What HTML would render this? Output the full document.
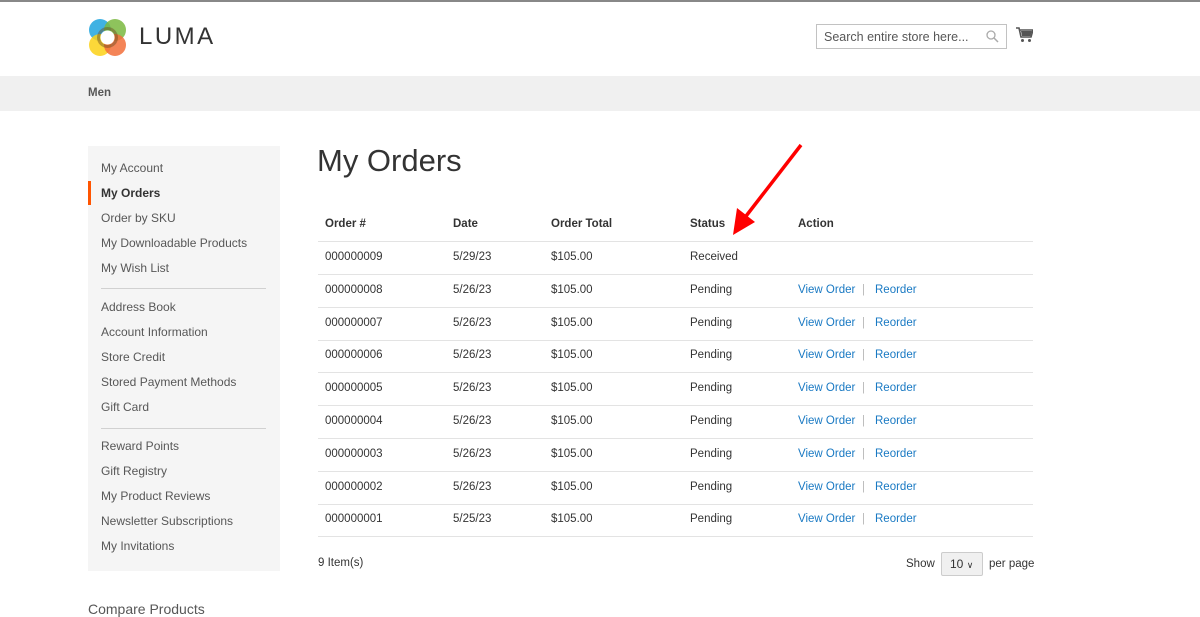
<!DOCTYPE html>
<html><head><meta charset="utf-8"><style>
*{margin:0;padding:0;box-sizing:border-box}
body{width:1200px;height:611px;overflow:hidden;background:#fff;font-family:"Liberation Sans",sans-serif;color:#333;font-size:12px;position:relative}
.a{position:absolute}
.nav{left:0;top:76px;width:1200px;height:35px;background:#f0f0f0}
.side{left:88px;top:146px;width:192px;height:425px;background:#f5f5f5}
.side div{position:absolute;left:13px;color:#575757;font-size:12px}
.hr{position:absolute;left:13px;width:165px;height:1px;background:#d1d1d1}
.row{position:absolute;left:318px;width:715px;height:1px;background:#e3e3e3}
.c{position:absolute;font-size:11.5px;color:#333}
.lk{color:#1979c3}
</style></head><body>
<div class="a" style="left:0;top:0;width:1200px;height:2px;background:#888"></div>
<svg class="a" style="left:88px;top:18px" width="40" height="40" viewBox="0 0 40 40">
<circle cx="12" cy="12" r="11" fill="#1ea4de" opacity=".85"/>
<circle cx="27" cy="12" r="11" fill="#7ab940" opacity=".85"/>
<circle cx="12" cy="27" r="11" fill="#fcd116" opacity=".85"/>
<circle cx="27" cy="27" r="11" fill="#f26f3a" opacity=".85"/>
<circle cx="19.5" cy="19.5" r="9" fill="none" stroke="#6a4a1e" stroke-width="3" opacity=".45"/>
<circle cx="19.5" cy="19.5" r="7" fill="#fff"/>
</svg>
<div class="a" style="left:139px;top:23px;font-size:24px;letter-spacing:2.5px;color:#333">LUMA</div>
<div class="a" style="left:816px;top:24px;width:191px;height:25px;border:1px solid #c2c2c2;font-size:12.5px;color:#575757;padding:5px 7px">Search entire store here...</div>
<svg class="a" style="left:986px;top:30px" width="13" height="13" viewBox="0 0 13 13"><circle cx="5" cy="5" r="4" fill="none" stroke="#aaa" stroke-width="1.3"/><path d="M8 8l4 4" stroke="#aaa" stroke-width="1.5"/></svg>
<svg class="a" style="left:1016px;top:27px" width="17" height="16" viewBox="0 0 17 16"><path d="M0 1h3l2 9h10l2-7H4" fill="none" stroke="#555" stroke-width="1.6"/><path d="M5 4h11l-1.5 5H6z" fill="#555"/><circle cx="6.5" cy="13.5" r="1.5" fill="#555"/><circle cx="13.5" cy="13.5" r="1.5" fill="#555"/></svg>
<div class="a nav"></div>
<div class="a" style="left:88px;top:87px;font-size:11.5px;font-weight:bold;color:#575757">Men</div>
<div class="a side">
<div style="top:15px">My Account</div>
<div style="top:40px;color:#333;font-weight:bold">My Orders</div>
<span style="position:absolute;left:0;top:35px;width:3px;height:24px;background:#ff5501"></span>
<div style="top:65px">Order by SKU</div>
<div style="top:90px">My Downloadable Products</div>
<div style="top:115px">My Wish List</div>
<span class="hr" style="top:142px"></span>
<div style="top:154px">Address Book</div>
<div style="top:179px">Account Information</div>
<div style="top:204px">Store Credit</div>
<div style="top:229px">Stored Payment Methods</div>
<div style="top:254px">Gift Card</div>
<span class="hr" style="top:282px"></span>
<div style="top:293px">Reward Points</div>
<div style="top:318px">Gift Registry</div>
<div style="top:343px">My Product Reviews</div>
<div style="top:368px">Newsletter Subscriptions</div>
<div style="top:393px">My Invitations</div>
</div>
<div class="a" style="left:88px;top:601px;font-size:14px;color:#575757">Compare Products</div>
<div class="a" style="left:317px;top:143px;font-size:31px;font-weight:300;color:#333">My Orders</div>
<div class="c" style="left:325px;top:218px;font-weight:bold">Order #</div>
<div class="c" style="left:453px;top:218px;font-weight:bold">Date</div>
<div class="c" style="left:551px;top:218px;font-weight:bold">Order Total</div>
<div class="c" style="left:690px;top:218px;font-weight:bold">Status</div>
<div class="c" style="left:798px;top:218px;font-weight:bold">Action</div>
<div class="row" style="top:241px"></div>
<div id="rows"></div>
<script>
var d=["5/29/23","5/26/23","5/26/23","5/26/23","5/26/23","5/26/23","5/26/23","5/26/23","5/25/23"],h="";
for(var i=0;i<9;i++){var y=251+i*32.8;
h+='<div class="c" style="left:325px;top:'+y+'px">00000000'+(9-i)+'</div><div class="c" style="left:453px;top:'+y+'px">'+d[i]+'</div><div class="c" style="left:551px;top:'+y+'px">$105.00</div><div class="c" style="left:690px;top:'+y+'px">'+(i?'Pending':'Received')+'</div>';
if(i)h+='<div class="c lk" style="left:798px;top:'+y+'px">View Order</div><div class="c" style="left:862px;top:'+y+'px;color:#bbb">|</div><div class="c lk" style="left:875px;top:'+y+'px">Reorder</div>';
h+='<div class="row" style="top:'+(274+i*32.8)+'px"></div>';}
document.getElementById('rows').innerHTML=h;
</script>
<div class="c" style="left:318px;top:557px">9 Item(s)</div>
<div class="c" style="left:906px;top:558px">Show</div>
<div class="a" style="left:941px;top:552px;width:42px;height:24px;background:#f0f0f0;border:1px solid #ccc;border-radius:2px;font-size:12px;padding:4px 8px">10 <span style="font-size:9px">&#8744;</span></div>
<div class="c" style="left:989px;top:558px">per page</div>
<svg class="a" style="left:725px;top:140px" width="85" height="100" viewBox="0 0 85 100"><path d="M76 5L18 80" stroke="#f00" stroke-width="3.5"/><path d="M8 95L12 68L30 82z" fill="#f00"/></svg>
</body></html>
